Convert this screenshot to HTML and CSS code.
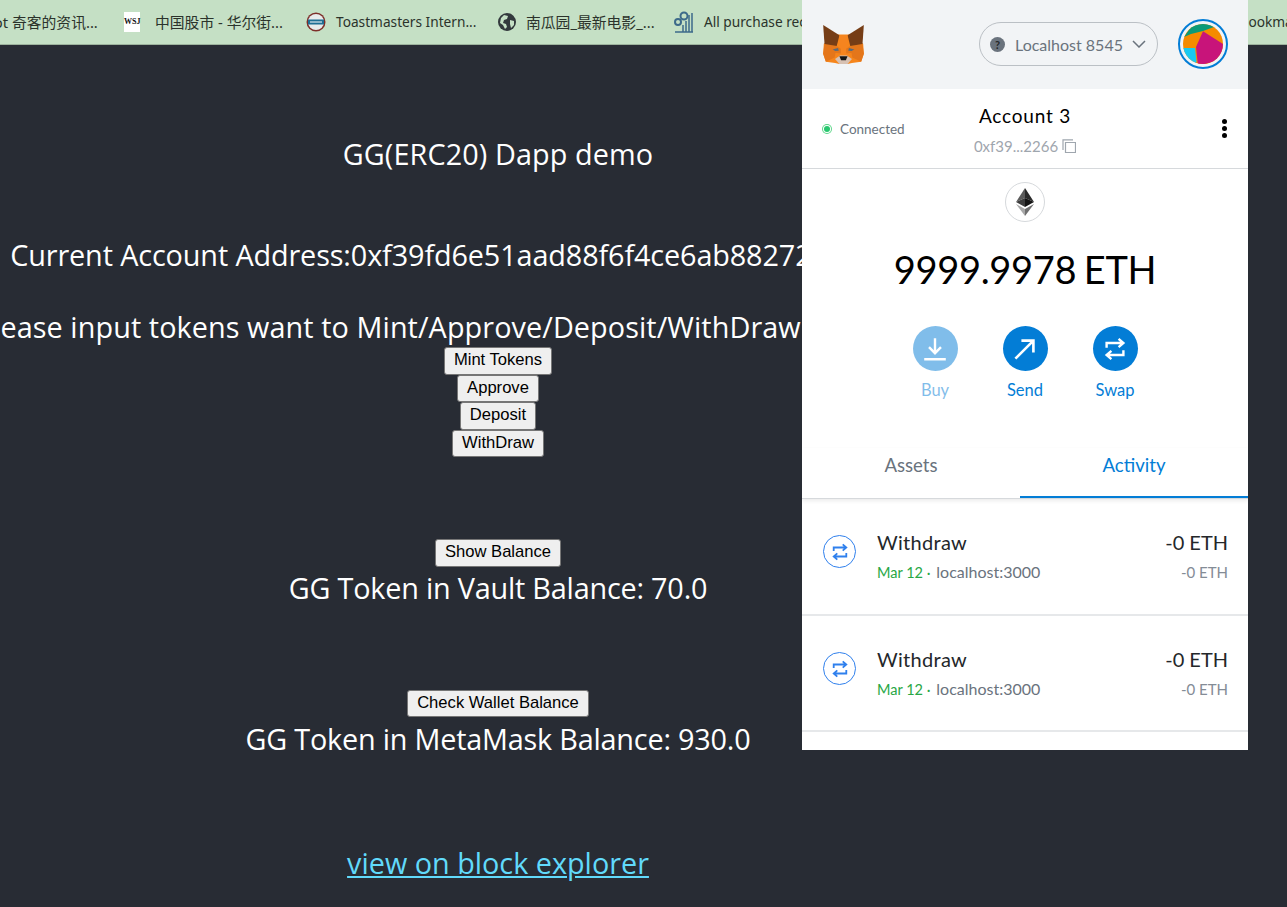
FILE: index.html
```html
<!DOCTYPE html>
<html lang="en">
<head>
  <meta charset="UTF-8">
  <title>GG(ERC20) Dapp demo</title>
  <link rel="stylesheet" href="styles.css">
</head>
<body>

<div class="bookmarks">
  <span class="bm-text bm-cjk bm-first">Solidot 奇客的资讯...</span>
  <span class="bm-wsj">WSJ</span>
  <span class="bm-text bm-cjk bm-wide">中国股市 - 华尔街...</span>
  <svg class="bm-icon" viewBox="0 0 20 20"><circle cx="10" cy="10" r="9.5" fill="#7d2f2a"/><circle cx="10" cy="10" r="8" fill="#e8ecec"/><path d="M2 10h16" stroke="#1f6f94" stroke-width="5"/><path d="M4 10h12" stroke="#fff" stroke-width="1"/></svg>
  <span class="bm-text bm-toast">Toastmasters Intern...</span>
  <svg class="bm-icon bm-globe" viewBox="0 0 20 20"><circle cx="10" cy="10" r="9" fill="#33393d"/><path d="M7 3l4 1-1 3-3 1-1 3 3 1 1 3-2 2-2-4-3-2 1-5zM13 8l4 1 0 4-3 3-1-4z" fill="#c5e0c5"/></svg>
  <span class="bm-text bm-cjk bm-nangua">南瓜园_最新电影_...</span>
  <svg class="bm-icon gears" viewBox="0 0 22 22"><circle cx="11" cy="5" r="3.5" fill="none" stroke="#3d6a8a" stroke-width="2"/><circle cx="5" cy="11" r="3" fill="none" stroke="#3d6a8a" stroke-width="2"/><path d="M2 21h18M10 21v-7M13 21V10M16 21V4M19 21V2" stroke="#3d6a8a" stroke-width="1.5"/></svg>
  <span class="bm-text bm-last">All purchase records</span>
  <span class="bm-text bm-other">Other bookmarks</span>
</div>

<div class="app">
  <h2 class="title">GG(ERC20) Dapp demo</h2>
  <p class="line account-line">Current Account Address:0xf39fd6e51aad88f6f4ce6ab8827279cfffb92266</p>
  <p class="line input-line">Please input tokens want to Mint/Approve/Deposit/WithDraw tokens amount:</p>
  <button class="btn">Mint Tokens</button>
  <button class="btn">Approve</button>
  <button class="btn">Deposit</button>
  <button class="btn">WithDraw</button>
  <button class="btn btn-gap">Show Balance</button>
  <p class="line balance">GG Token in Vault Balance: 70.0</p>
  <button class="btn btn-gap btn-wallet">Check Wallet Balance</button>
  <p class="line balance">GG Token in MetaMask Balance: 930.0</p>
  <a class="line explorer" href="#">view on block explorer</a>
</div>

<div class="popup">
  <div class="popup-head">
    <svg class="fox" viewBox="0 0 120 115">
      <polygon fill="#f6851b" points="2,55 38,28 82,28 118,55 120,85 112,108 85,112 72,115 48,115 35,112 8,108 0,85"/>
      <polygon fill="#e4761b" points="0,85 4,56 40,62 34,96 8,108"/>
      <polygon fill="#e4761b" points="120,85 116,56 80,62 86,96 112,108"/>
      <polygon fill="#763d16" points="0,0 48,30 40,62 4,56"/>
      <polygon fill="#763d16" points="120,0 72,30 80,62 116,56"/>
      <polygon fill="#f5841f" points="48,30 72,30 68,84 52,84"/>
      <polygon fill="#e2761b" points="40,62 52,70 52,84 34,82"/>
      <polygon fill="#e2761b" points="80,62 68,70 68,84 86,82"/>
      <polygon fill="#5b6a78" points="28,72 44,68 46,76 36,77"/>
      <polygon fill="#5b6a78" points="92,72 76,68 74,76 84,77"/>
      <polygon fill="#d7c1b3" points="35,100 50,90 70,90 85,100 72,115 48,115"/>
      <polygon fill="#161616" points="48,92 72,92 67,104 53,104"/>
    </svg>
    <div class="network">
      <span class="net-q">?</span>
      <span class="net-name">Localhost 8545</span>
      <svg class="chevron" viewBox="0 0 14 8"><path d="M1 1l6 6 6-6" fill="none" stroke="#6a737d" stroke-width="1.5"/></svg>
    </div>
    <div class="avatar-ring">
      <svg class="avatar" viewBox="0 0 40 40">
        <rect width="40" height="40" fill="#f58b00"/>
        <polygon fill="#0a9a78" points="1,13 10,0 31,0 31,3 20,7 8,10"/>
        <polygon fill="#c8147a" points="20,7.3 40,20 40,35 15,42 13,23"/>
        <polygon fill="#18c9f2" points="0,24 12,24 13.5,38 12,40 0,40"/>
      </svg>
    </div>
  </div>

  <div class="account-row">
    <div class="connected"><span class="green-dot"></span>Connected</div>
    <div class="account-info">
      <div class="account-name">Account 3</div>
      <div class="account-addr">0xf39...2266
        <svg class="copy" viewBox="0 0 14 14"><path d="M3.5 3.5h10v10h-10z M1 11V.8h10" fill="none" stroke="#9fa6ae" stroke-width="1.2"/></svg>
      </div>
    </div>
    <div class="kebab"><i></i><i></i><i></i></div>
  </div>

  <div class="overview">
    <div class="eth-circle">
      <svg viewBox="0 0 18 28" class="eth-logo">
        <polygon fill="#5c5c5c" points="9,0 0,14 9,10"/>
        <polygon fill="#2b2b2b" points="9,0 18,14 9,10"/>
        <polygon fill="#3c3c3c" points="0,14 9,19 9,10"/>
        <polygon fill="#141414" points="18,14 9,19 9,10"/>
        <polygon fill="#a8a8a8" points="0,16 9,28 9,21"/>
        <polygon fill="#6f6f6f" points="18,16 9,28 9,21"/>
      </svg>
    </div>
    <div class="eth-balance">9999.9978 ETH</div>
    <div class="actions">
      <div class="action action-off">
        <span class="action-btn"><svg viewBox="0 0 20 20"><path d="M10 1v12M5 8.500l5 5 5-5M1 18.500h18" fill="none" stroke="#fff" stroke-width="2"/></svg></span>
        Buy
      </div>
      <div class="action">
        <span class="action-btn"><svg viewBox="0 0 20 20"><path d="M2 18L17 3M7 3h10v10" fill="none" stroke="#fff" stroke-width="2.200"/></svg></span>
        Send
      </div>
      <div class="action">
        <span class="action-btn"><svg viewBox="0 0 20 20"><path d="M3 9V5h13M13 1.500L17 5l-4 3.500M17 11v4H4M7 11.500L3 15l4 3.500" fill="none" stroke="#fff" stroke-width="2"/></svg></span>
        Swap
      </div>
    </div>
  </div>

  <div class="tabs">
    <div class="tab">Assets</div>
    <div class="tab tab-on">Activity</div>
  </div>

  <div class="tx-row tx-first">
    <span class="tx-icon"><svg viewBox="0 0 20 20"><path d="M3 9V5h13M13 1.500L17 5l-4 3.500M17 11v4H4M7 11.500L3 15l4 3.500" fill="none" stroke="#2f80ed" stroke-width="2"/></svg></span>
    <div class="tx-main">
      <div class="tx-title">Withdraw</div>
      <div class="tx-sub"><span class="tx-date">Mar 12 ·</span> <span class="tx-host">localhost:3000</span></div>
    </div>
    <div class="tx-amount">
      <div class="tx-title">-0 ETH</div>
      <div class="tx-sub">-0 ETH</div>
    </div>
  </div>
  <div class="tx-row">
    <span class="tx-icon"><svg viewBox="0 0 20 20"><path d="M3 9V5h13M13 1.500L17 5l-4 3.500M17 11v4H4M7 11.500L3 15l4 3.500" fill="none" stroke="#2f80ed" stroke-width="2"/></svg></span>
    <div class="tx-main">
      <div class="tx-title">Withdraw</div>
      <div class="tx-sub"><span class="tx-date">Mar 12 ·</span> <span class="tx-host">localhost:3000</span></div>
    </div>
    <div class="tx-amount">
      <div class="tx-title">-0 ETH</div>
      <div class="tx-sub">-0 ETH</div>
    </div>
  </div>
</div>

</body>
</html>
```

FILE: styles.css
```css
html, body {
  height: 100%;
}
body {
  margin: 0;
  background-color: #282c34;
  color: white;
  font-family: "Open Sans", sans-serif;
  overflow: hidden;
}

/* bookmarks bar */
.bookmarks {
  height: 44px;
  background-color: #c5e0c5;
  border-bottom: 1px solid #9db39d;
  display: flex;
  align-items: center;
  font-family: "Noto Sans", "Noto Sans CJK SC", sans-serif;
  font-size: 13.700px;
  color: #2b332b;
  white-space: nowrap;
  overflow: hidden;
}
.bm-text {
  flex: none;
  margin-bottom: 2px;
}
.bm-cjk {
  font-size: 14.800px;
}
.bm-first {
  width: 143px;
  margin-left: -40px;
  margin-right: 21px;
}
.bm-wsj {
  flex: none;
  width: 16px;
  height: 20px;
  background-color: white;
  text-align: center;
  color: #111;
  font-family: "Liberation Serif", serif;
  font-size: 8px;
  font-weight: bold;
  line-height: 20px;
  margin-right: 15px;
}
.bm-icon {
  flex: none;
  width: 20px;
  height: 20px;
}
.bm-wide {
  width: 130px;
  margin-right: 21px;
}
.bm-toast {
  width: 140px;
  margin-left: 10px;
  margin-right: 21px;
}
.bm-nangua {
  width: 130px;
  margin-left: 9px;
  margin-right: 17px;
}
.gears {
  width: 22px;
  height: 22px;
  margin-right: 9px;
}
.bm-last {
  width: 300px;
}
.bm-other {
  margin-left: 195px;
}

/* page */
.app {
  width: 996px;
  display: flex;
  flex-direction: column;
  align-items: center;
  text-align: center;
  font-size: 28.8px;
}
.title {
  margin: 90px 0 0;
  font-size: 28.8px;
  font-weight: normal;
  line-height: 38px;
  letter-spacing: .1px;
}
.line {
  margin: 0;
  line-height: 38px;
  white-space: nowrap;
}
.account-line {
  margin-top: 63px;
  letter-spacing: -.12px;
}
.input-line {
  margin-top: 34px;
  margin-bottom: 1px;
  letter-spacing: .08px;
}
.balance {
  margin-top: 2px;
  letter-spacing: -.2px;
}
.btn {
  height: 27.5px;
  padding: 0 9.2px 1px;
  background-color: #efefef;
  border: 1px solid #767676;
  border-radius: 3px;
  color: black;
  font-family: "Liberation Sans", Arial, sans-serif;
  font-size: 16.600px;
}
.btn-gap {
  margin-top: 82px;
}
.btn-wallet {
  margin-top: 83px;
  margin-bottom: 1px;
}
.explorer {
  margin-top: 86px;
  color: #61dafb;
}

/* metamask popup lies over the page */
.popup {
  position: absolute;
  top: 0;
  left: 802px;
  width: 446px;
  height: 750px;
  background-color: white;
  color: #24272a;
  font-family: "Lato", sans-serif;
  overflow: hidden;
}
.popup-head {
  height: 89px;
  background-color: #f2f4f6;
  display: flex;
  align-items: center;
  padding: 0 20px 1px 21px;
  box-sizing: border-box;
}
.fox {
  width: 41px;
  height: 39px;
  margin-right: auto;
}
.network {
  width: 179px;
  height: 44px;
  box-sizing: border-box;
  border: 1px solid #bbc0c5;
  border-radius: 22px;
  display: flex;
  align-items: center;
  padding: 0 11px 0 10px;
  color: #6a737d;
  font-size: 16px;
  margin-right: 20px;
}
.net-q {
  width: 15px;
  height: 15px;
  border-radius: 50%;
  background-color: #6a737d;
  color: #24272a;
  font-size: 11px;
  font-weight: bold;
  text-align: center;
  line-height: 15px;
  margin-right: 10px;
}
.chevron {
  width: 14px;
  height: 8px;
  margin-left: auto;
}
.avatar-ring {
  width: 50px;
  height: 50px;
  box-sizing: border-box;
  border: 2px solid #037dd6;
  border-radius: 50%;
  padding: 3px;
}
.avatar {
  display: block;
  width: 40px;
  height: 40px;
  border-radius: 50%;
}

.account-row {
  height: 80px;
  box-sizing: border-box;
  border-bottom: 1px solid #d6d9dc;
  display: grid;
  grid-template-columns: 1fr auto 1fr;
  align-items: center;
  padding: 0 20px;
}
.connected {
  display: flex;
  align-items: center;
  color: #6a737d;
  font-size: 13.500px;
}
.green-dot {
  width: 6px;
  height: 6px;
  border-radius: 50%;
  background-color: #28c76f;
  box-shadow: 0 0 0 1px white, 0 0 0 2px #5fd68a;
  margin-right: 10px;
  margin-left: 2px;
}
.account-info {
  text-align: center;
  padding-top: 2px;
}
.account-name {
  font-size: 19px;
  letter-spacing: .8px;
  color: black;
  line-height: 24px;
  margin-bottom: 9px;
}
.account-addr {
  display: flex;
  align-items: center;
  justify-content: center;
  gap: 4px;
  font-size: 15px;
  color: #9fa6ae;
}
.copy {
  width: 14px;
  height: 14px;
}
.kebab {
  justify-self: end;
  display: flex;
  flex-direction: column;
  gap: 2px;
  margin-right: 1px;
}
.kebab i {
  display: block;
  width: 5px;
  height: 5px;
  border-radius: 50%;
  background-color: black;
}

.overview {
  height: 329px;
  box-sizing: border-box;
  padding-top: 13px;
  display: flex;
  flex-direction: column;
  align-items: center;
}
.eth-circle {
  width: 40px;
  height: 40px;
  box-sizing: border-box;
  border: 1px solid #d6d9dc;
  border-radius: 50%;
  display: flex;
  align-items: center;
  justify-content: center;
}
.eth-logo {
  width: 18px;
  height: 28px;
}
.eth-balance {
  margin-top: 23px;
  font-size: 38px;
  letter-spacing: -.3px;
  word-spacing: -2px;
  line-height: 48px;
  color: black;
}
.actions {
  display: flex;
  gap: 45px;
  margin-top: 33px;
}
.action {
  width: 45px;
  display: flex;
  flex-direction: column;
  align-items: center;
  color: #037dd6;
  font-size: 16.500px;
  line-height: 20px;
}
.action-off {
  opacity: .5;
}
.action-btn {
  width: 45px;
  height: 45px;
  border-radius: 50%;
  background-color: #037dd6;
  display: flex;
  align-items: center;
  justify-content: center;
  margin-bottom: 9px;
}
.action-btn svg {
  width: 24px;
  height: 24px;
}

.tabs {
  display: flex;
  height: 50px;
  margin-top: -50px;
  border-bottom: 1px solid #d6d9dc;
  box-shadow: 0 2px 4px rgba(0, 0, 0, .08);
  font-size: 18.600px;
}
.tab {
  flex: 1;
  text-align: center;
  color: #6a737d;
  line-height: 34px;
  box-sizing: border-box;
}
.tab:first-child {
  flex: none;
  width: 218px;
}
.tab-on {
  color: #037dd6;
  border-bottom: 2px solid #037dd6;
}

.tx-row {
  height: 116px;
  box-sizing: border-box;
  border-bottom: 2px solid #e6e8ea;
  display: flex;
  padding: 30px 20px 0 21px;
}
.tx-first {
  height: 117px;
}
.tx-icon {
  width: 33px;
  height: 33px;
  box-sizing: border-box;
  border: 1px solid #2f80ed;
  border-radius: 50%;
  display: flex;
  align-items: center;
  justify-content: center;
  margin-top: 6px;
  margin-right: 21px;
}
.tx-icon svg {
  width: 18px;
  height: 18px;
}
.tx-main {
  flex: 1;
}
.tx-title {
  font-size: 20px;
  letter-spacing: .3px;
  line-height: 26px;
}
.tx-amount .tx-title {
  letter-spacing: 0;
}
.tx-sub {
  font-size: 15px;
  line-height: 20px;
  margin-top: 7px;
  color: #6a737d;
}
.tx-date {
  color: #28a745;
  font-size: 14.500px;
}
.tx-host {
  font-size: 16px;
  margin-left: 2px;
}
.tx-amount {
  text-align: right;
}
.tx-amount .tx-sub {
  color: #848c96;
}
```
